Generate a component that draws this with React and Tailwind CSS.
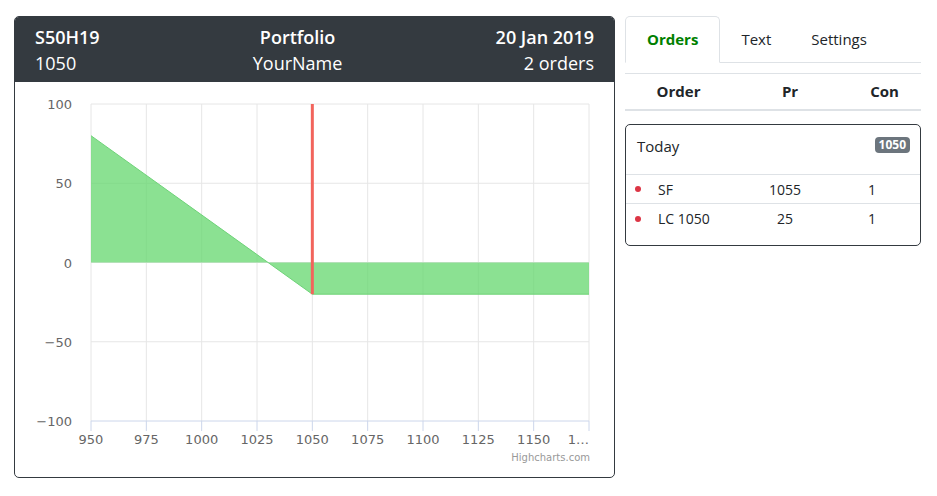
import React from "react";

const X0 = 76;
const X1 = 574;
const xs = (v) => X0 + ((v - 950) * (X1 - X0)) / 225;
const ys = (v) => 180.5 - v * 1.585;

const xTicks = [950, 975, 1000, 1025, 1050, 1075, 1100, 1125, 1150, 1175];
const yTicks = [100, 50, 0, -50, -100];

function PayoffChart() {
  const area = `M${xs(950)},${ys(0)} L${xs(950)},${ys(80)} L${xs(1050)},${ys(-20)} L${xs(1175)},${ys(-20)} L${xs(1175)},${ys(0)} Z`;
  const line = `M${xs(950)},${ys(80)} L${xs(1050)},${ys(-20)} L${xs(1175)},${ys(-20)}`;
  return (
    <svg width="599" height="395" className="block" style={{ fontFamily: '"DejaVu Sans", Verdana, sans-serif' }}>
      {/* grid */}
      {xTicks.map((t) => (
        <line key={t} x1={xs(t)} x2={xs(t)} y1={ys(100)} y2={ys(-100)} stroke="#e6e6e6" strokeWidth="1" />
      ))}
      {yTicks.slice(0, 4).map((t) => (
        <line key={t} x1={X0} x2={X1} y1={ys(t)} y2={ys(t)} stroke="#e6e6e6" strokeWidth="1" />
      ))}

      {/* series */}
      <path d={area} fill="rgb(100,215,110)" fillOpacity="0.75" />
      <path d={line} fill="none" stroke="rgb(110,210,120)" strokeWidth="1" />
      <line x1={xs(1050)} x2={xs(1050)} y1={ys(100)} y2={ys(-20)} stroke="#f2645c" strokeWidth="3" />

      {/* x axis */}
      <line x1={X0} x2={X1} y1={ys(-100)} y2={ys(-100)} stroke="#ccd6eb" strokeWidth="1" />
      {xTicks.map((t) => (
        <line key={t} x1={xs(t)} x2={xs(t)} y1={ys(-100)} y2={ys(-100) + 10} stroke="#ccd6eb" strokeWidth="1" />
      ))}
      {xTicks.map((t, i) =>
        i === xTicks.length - 1 ? (
          <text key={t} x={X1} y={362} textAnchor="end" fontSize="13" fill="#666666">1…</text>
        ) : (
          <text key={t} x={xs(t)} y={362} textAnchor="middle" fontSize="13" fill="#666666">{t}</text>
        )
      )}
      {yTicks.map((t) => (
        <text key={t} x={57} y={ys(t) + 5} textAnchor="end" fontSize="13" fill="#666666">
          {t < 0 ? `−${Math.abs(t)}` : t}
        </text>
      ))}
      <text x={575} y={379} textAnchor="end" fontSize="10" fill="#999999">Highcharts.com</text>
    </svg>
  );
}

function Portfolio() {
  return (
    <div className="w-[601px] rounded-[5px] border border-[#343a40] overflow-hidden">
      <div className="bg-[#343a40] text-white flex justify-between px-[20px] pt-[7px] pb-[6px] text-[18px] leading-[26px]">
        <div>
          <div className="font-semibold">S50H19</div>
          <div>1050</div>
        </div>
        <div className="text-center">
          <div className="font-semibold">Portfolio</div>
          <div>YourName</div>
        </div>
        <div className="text-right">
          <div className="font-semibold">20 Jan 2019</div>
          <div>2 orders</div>
        </div>
      </div>
      <PayoffChart />
    </div>
  );
}

const orders = [
  { name: "SF", price: "1055", con: "1" },
  { name: "LC 1050", price: "25", con: "1" },
];

function OrdersPanel() {
  return (
    <div className="w-[296px] text-[#212529]">
      {/* tabs */}
      <div className="flex border-b border-[#dee2e6] h-[47px]">
        <div className="px-[21px] flex items-center border border-[#dee2e6] border-b-white rounded-t-[5px] -mb-px bg-white text-[#008000] font-bold text-[15px]">
          Orders
        </div>
        <div className="pl-[21px] pr-[20px] flex items-center text-[15px]">Text</div>
        <div className="px-[20px] flex items-center text-[15px]">Settings</div>
      </div>

      {/* table header */}
      <div className="mt-[10px] border-t border-[#dee2e6] border-b-2 border-b-[#dee2e6] flex h-[38px] items-center font-bold text-[15px]">
        <div className="w-[107px] text-center">Order</div>
        <div className="w-[116px] text-center">Pr</div>
        <div className="w-[73px] text-center">Con</div>
      </div>

      {/* day card */}
      <div className="mt-[13px] border border-[#343a40] rounded-[5px] pb-[12px]">
        <div className="flex justify-between items-start h-[50px] pl-[11px] pr-[10px] pt-[10px] border-b border-[#dee2e6]">
          <div className="text-[15px] font-medium leading-[22px]">Today</div>
          <div className="mt-[2px] bg-[#6c757d] text-white font-bold text-[12px] leading-[16px] px-[4px] rounded-[4px]">1050</div>
        </div>
        {orders.map((o, i) => (
          <div
            key={o.name}
            className={`flex items-center h-[29px] text-[14px] ${i === 0 ? "border-b border-[#dee2e6]" : ""}`}
          >
            <div className="w-[114px] flex items-center pl-[9px]">
              <span className="w-[6px] h-[6px] rounded-full bg-[#dc3545]" />
              <span className="ml-[17px]">{o.name}</span>
            </div>
            <div className="w-[90px] text-center">{o.price}</div>
            <div className="w-[84px] text-center">{o.con}</div>
          </div>
        ))}
      </div>
    </div>
  );
}

export default function App() {
  return (
    <div
      className="min-h-screen bg-white flex items-start gap-[10px] pl-[14px] pt-[16px]"
      style={{ fontFamily: '"Open Sans", "Noto Sans", sans-serif' }}
    >
      <Portfolio />
      <OrdersPanel />
    </div>
  );
}
